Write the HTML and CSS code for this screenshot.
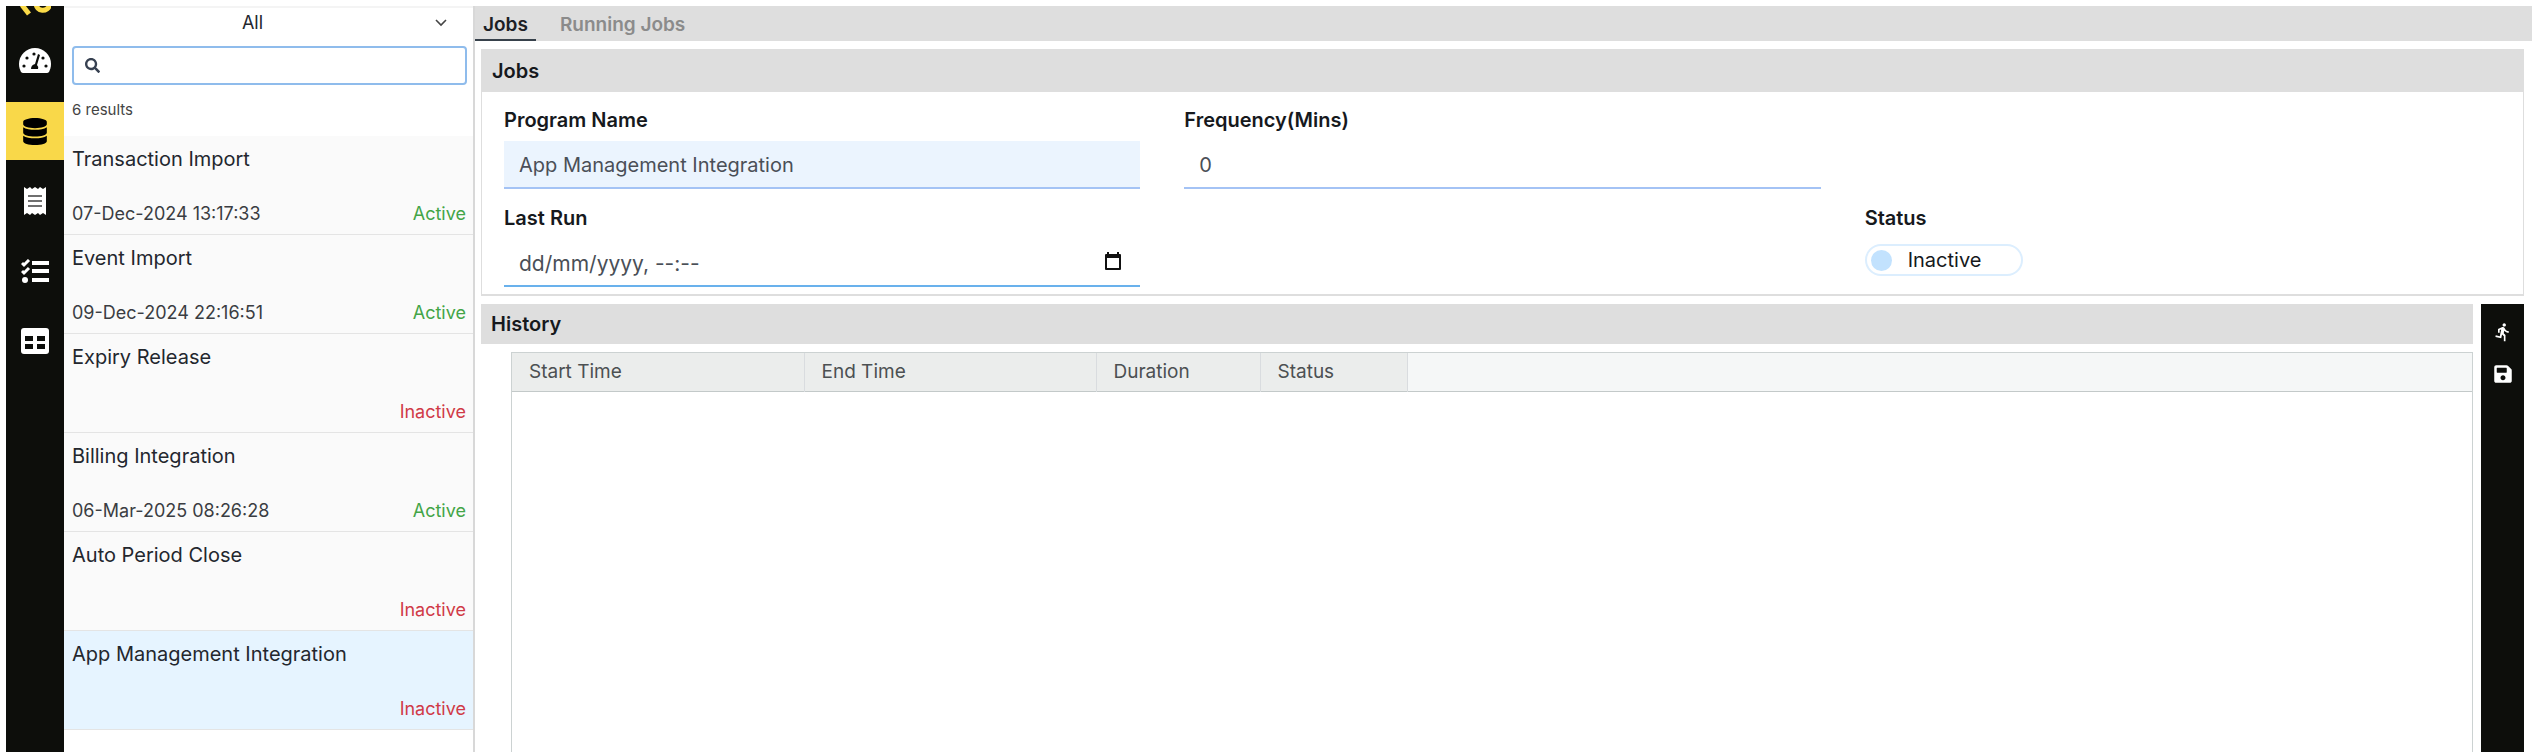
FILE: index.html
```html
<!DOCTYPE html>
<html lang="en">
<head>
    <meta charset="UTF-8">
    <meta name="viewport" content="width=device-width, initial-scale=1.0">
    <title>Jobs</title>
    <link rel="stylesheet" href="styles.css">
</head>
<body>
    <div class="app">
        <nav class="sidebar">
            <a href="#" class="logo" aria-label="Home">
                <svg width="32" height="14" viewBox="0 0 32 14">
                    <path d="M3 -1L10 8" stroke="#fbdb48" stroke-width="5"/>
                    <path d="M17 -3C17 6 29 7 31 -2" stroke="#fbdb48" stroke-width="5" fill="none"/>
                </svg>
            </a>
            <a href="#" class="nav-item" aria-label="Dashboard">
                <svg width="32" height="26" viewBox="0 0 32 26">
                    <path fill="#fff" d="M16 0A16 16 0 0 0 0 16C0 19 1 22 2 24Q3 25 4 25H28Q29 25 30 24C31 22 32 19 32 16A16 16 0 0 0 16 0Z"/>
                    <g fill="#0d0e0b">
                        <circle cx="5" cy="18" r="1.6"/>
                        <circle cx="8" cy="10" r="1.6"/>
                        <circle cx="15" cy="6" r="1.6"/>
                        <circle cx="24" cy="10" r="1.6"/>
                        <circle cx="27" cy="18" r="1.6"/>
                        <path d="M19 6L21 7L18 17Q20 19 19 21H12Q12 17 16 16Z"/>
                    </g>
                </svg>
            </a>
            <a href="#" class="nav-item active" aria-label="Jobs">
                <svg width="24" height="27" viewBox="0 0 448 512">
                    <path d="M448 73.143v45.714C448 159.143 347.667 192 224 192S0 159.143 0 118.857V73.143C0 32.857 100.333 0 224 0s224 32.857 224 73.143zM448 176v102.857C448 319.143 347.667 352 224 352S0 319.143 0 278.857V176c48.125 33.143 136.208 48.572 224 48.572S399.874 209.143 448 176zm0 160v102.857C448 479.143 347.667 512 224 512S0 479.143 0 438.857V336c48.125 33.143 136.208 48.572 224 48.572S399.874 369.143 448 336z"/>
                </svg>
            </a>
            <a href="#" class="nav-item" aria-label="Receipts">
                <svg width="22" height="28" viewBox="0 0 22 28">
                    <path fill="#fff" d="M0 0L3 2L6 0L8 2L11 0L14 2L16 0L19 2L22 0V28L19 26L16 28L14 26L11 28L8 26L6 28L3 26L0 28Z"/>
                    <path stroke="#6f6f6f" stroke-width="2" d="M4 9H18M4 14H18M4 19H18"/>
                </svg>
            </a>
            <a href="#" class="nav-item" aria-label="Tasks">
                <svg width="28" height="24" viewBox="0 0 28 24">
                    <g stroke="#fff" fill="none">
                        <path stroke-width="4" d="M11 4H28M11 12H28M11 21H28"/>
                        <path stroke-width="3" d="M1 4L3 6L8 1M1 12L3 14L8 9"/>
                    </g>
                    <circle cx="4" cy="21" r="3" fill="#fff"/>
                </svg>
            </a>
            <a href="#" class="nav-item" aria-label="Tables">
                <svg width="28" height="26" viewBox="0 0 28 26">
                    <rect width="28" height="26" rx="3" fill="#fff"/>
                    <path fill="#0d0e0b" d="M4 8H12V13H4ZM16 8H24V13H16ZM4 16H12V21H4ZM16 16H24V21H16Z"/>
                </svg>
            </a>
        </nav>

        <aside class="list-panel">
            <div class="filter">
                <select aria-label="Status filter">
                    <option>All</option>
                    <option>Active</option>
                    <option>Inactive</option>
                </select>
                <svg class="chevron" width="12" height="8" viewBox="0 0 12 8">
                    <path d="M1 1L6 6L11 1" fill="none" stroke="#444" stroke-width="1.6"/>
                </svg>
            </div>
            <div class="search">
                <svg width="15" height="15" viewBox="0 0 512 512">
                    <path fill="#374151" d="M505 442.7L405.3 343c-4.5-4.5-10.6-7-17-7H372c27.6-35.3 44-79.7 44-128C416 93.1 322.9 0 208 0S0 93.1 0 208s93.1 208 208 208c48.3 0 92.7-16.4 128-44v16.3c0 6.4 2.5 12.5 7 17l99.7 99.7c9.4 9.4 24.6 9.4 33.9 0l28.3-28.3c9.4-9.4 9.4-24.6.1-34zM208 336c-70.7 0-128-57.2-128-128 0-70.7 57.2-128 128-128 70.7 0 128 57.2 128 128 0 70.7-57.2 128-128 128z"/>
                </svg>
                <input type="text" aria-label="Search">
            </div>
            <p class="results">6 results</p>
            <ul class="job-list">
                <li>
                    <h2>Transaction Import</h2>
                    <p><span>07-Dec-2024 13:17:33</span><span class="on">Active</span></p>
                </li>
                <li>
                    <h2>Event Import</h2>
                    <p><span>09-Dec-2024 22:16:51</span><span class="on">Active</span></p>
                </li>
                <li>
                    <h2>Expiry Release</h2>
                    <p><span></span><span class="off">Inactive</span></p>
                </li>
                <li>
                    <h2>Billing Integration</h2>
                    <p><span>06-Mar-2025 08:26:28</span><span class="on">Active</span></p>
                </li>
                <li>
                    <h2>Auto Period Close</h2>
                    <p><span></span><span class="off">Inactive</span></p>
                </li>
                <li class="selected">
                    <h2>App Management Integration</h2>
                    <p><span></span><span class="off">Inactive</span></p>
                </li>
            </ul>
        </aside>

        <main>
            <div class="tabs">
                <button class="tab current">Jobs</button>
                <button class="tab">Running Jobs</button>
            </div>

            <section class="card">
                <h3>Jobs</h3>
                <form class="fields">
                    <div class="field">
                        <label for="program">Program Name</label>
                        <input id="program" class="filled" type="text" value="App Management Integration">
                    </div>
                    <div class="field">
                        <label for="frequency">Frequency(Mins)</label>
                        <input id="frequency" type="text" value="0">
                    </div>
                    <div class="field first">
                        <label for="last-run">Last Run</label>
                        <div class="date">
                            <input id="last-run" type="text" placeholder="dd/mm/yyyy, --:--">
                            <button type="button" aria-label="Pick a date">
                                <svg width="18" height="18" viewBox="0 0 18 18">
                                    <path fill="#111" d="M3 0H5V2H13V0H15V2H16Q17 2 17 3V17Q17 18 16 18H2Q1 18 1 17V3Q1 2 2 2H3ZM3 6V16H15V6Z"/>
                                </svg>
                            </button>
                        </div>
                    </div>
                    <div class="field last">
                        <label for="status">Status</label>
                        <label class="toggle"><input id="status" type="checkbox"><span>Inactive</span></label>
                    </div>
                </form>
            </section>

            <div class="bottom">
                <section class="history">
                    <h3>History</h3>
                    <div class="grid">
                        <table>
                            <thead>
                                <tr>
                                    <th class="time">Start Time</th>
                                    <th class="time">End Time</th>
                                    <th class="duration">Duration</th>
                                    <th class="status">Status</th>
                                    <td></td>
                                </tr>
                            </thead>
                        </table>
                    </div>
                </section>
                <div class="actions">
                    <button aria-label="Run">
                        <svg width="20" height="20" viewBox="0 0 24 24">
                            <path fill="#fff" d="M13.49 5.48c1.1 0 2-.9 2-2s-.9-2-2-2-2 .9-2 2 .9 2 2 2zm-3.6 13.9l1-4.4 2.1 2v6h2v-7.5l-2.1-2 .6-3c1.3 1.5 3.3 2.5 5.5 2.5v-2c-1.9 0-3.5-1-4.3-2.4l-1-1.6c-.4-.6-1-1-1.7-1-.3 0-.5.1-.8.1l-5.2 2.2v4.7h2v-3.4l1.8-.7-1.6 8.1-4.9-1-.4 2 7 1.4z"/>
                        </svg>
                    </button>
                    <button aria-label="Save">
                        <svg width="18" height="20" viewBox="0 0 448 512">
                            <path fill="#fff" d="M433.941 129.941l-83.882-83.882A48 48 0 0 0 316.118 32H48C21.49 32 0 53.49 0 80v352c0 26.51 21.49 48 48 48h352c26.51 0 48-21.49 48-48V163.882a48 48 0 0 0-14.059-33.941zM224 416c-35.346 0-64-28.654-64-64 0-35.346 28.654-64 64-64s64 28.654 64 64c0 35.346-28.654 64-64 64zm96-304.52V212c0 6.627-5.373 12-12 12H76c-6.627 0-12-5.373-12-12V108c0-6.627 5.373-12 12-12h228.52c3.183 0 6.235 1.264 8.485 3.515l3.48 3.48A11.996 11.996 0 0 1 320 111.48z"/>
                        </svg>
                    </button>
                </div>
            </div>
        </main>
    </div>
</body>
</html>
```
FILE: styles.css
```css
*{
    box-sizing: border-box;
    margin: 0;
    padding: 0;
}

body{
    background: #fff;
    color: #23272e;
    font-family: Inter, "Liberation Sans", sans-serif;
    font-size: 20px;
    line-height: 24px;
}

button, input, select{
    font: inherit;
    color: inherit;
    border: 0;
    background: none;
    outline: none;
}

.app{
    display: flex;
    height: 100vh;
    padding: 6px 8px 4px 6px;
}

/* left icon bar */
.sidebar{
    width: 58px;
    flex-shrink: 0;
    display: flex;
    flex-direction: column;
    gap: 12px;
    background: #0d0e0b;
}

.logo{
    height: 14px;
    display: flex;
    justify-content: center;
}

.nav-item{
    height: 58px;
    display: flex;
    align-items: center;
    justify-content: center;
}

.nav-item.active{
    background: #f9d849;
}

/* job list */
.list-panel{
    width: 411px;
    flex-shrink: 0;
    border-right: 2px solid #d8d8d8;
}

.filter{
    position: relative;
    height: 40px;
    border-top: 2px solid #f4f4f4;
}

.filter select{
    width: 100%;
    height: 30px;
    padding-right: 32px;
    appearance: none;
    font-size: 18px;
    text-align-last: center;
}

.chevron{
    position: absolute;
    right: 26px;
    top: 11px;
    pointer-events: none;
}

.search{
    display: flex;
    align-items: center;
    gap: 8px;
    height: 39px;
    margin: 0 6px 0 8px;
    padding: 0 11px;
    border: 2px solid #8fbcec;
    border-radius: 4px;
}

.search input{
    flex: 1;
}

.results{
    height: 51px;
    padding: 13px 8px;
    font-size: 15px;
    color: #444;
}

.job-list{
    list-style: none;
}

.job-list li{
    height: 99px;
    padding: 11px 7px 8px 8px;
    display: flex;
    flex-direction: column;
    justify-content: space-between;
    background: #fafafa;
    border-bottom: 1px solid #e4e4e4;
}

.job-list li.selected{
    background: #e6f4ff;
}

.job-list h2{
    font-size: 20px;
    font-weight: 400;
}

.job-list p{
    display: flex;
    justify-content: space-between;
    font-size: 18px;
    color: #3a3d42;
}

.job-list .on{
    color: #43a547;
}

.job-list .off{
    color: #d03a47;
}

/* right side */
main{
    flex: 1;
    display: flex;
    flex-direction: column;
}

.tabs{
    display: flex;
    gap: 16px;
    height: 35px;
    background: #dedede;
}

.tab{
    padding: 4px 8px 0;
    font-size: 19px;
    font-weight: 600;
    color: #8b8b8b;
    border-bottom: 2px solid transparent;
}

.tab.current{
    color: #1c2025;
    border-color: #37414b;
}

h3{
    font-size: 20px;
    font-weight: 600;
    background: #dedede;
    color: #16191d;
}

.card{
    margin: 8px 8px 0 6px;
    border: 1px solid #dedede;
    border-bottom-width: 2px;
}

.card h3{
    padding: 9px 10px;
    height: 42px;
}

.fields{
    display: grid;
    grid-template-columns: repeat(3, 1fr);
    row-gap: 17px;
    padding: 16px 0 7px;
}

.field{
    padding: 0 22px;
}

.field.first{
    grid-column: 1;
}

.field.last{
    grid-column: 3;
}

.field label{
    display: block;
    margin-bottom: 9px;
    font-weight: 600;
    color: #16191d;
}

.field input[type="text"]{
    display: block;
    width: 100%;
    height: 48px;
    padding: 2px 15px 0;
    border-bottom: 2px solid #a4c3f5;
    color: #4a4f57;
}

.field input.filled{
    background: #ebf4fe;
}

.date{
    position: relative;
}

.field .date input{
    border-color: #69b1ec;
    font-size: 21px;
}

.date input::placeholder{
    color: #4a4f57;
    opacity: 1;
}

.date button{
    position: absolute;
    right: 18px;
    top: 13px;
    display: flex;
}

.field .toggle{
    display: flex;
    align-items: center;
    gap: 16px;
    width: 158px;
    height: 32px;
    margin-top: 14px;
    padding: 0 4px;
    border: 2px solid #dceefe;
    border-radius: 16px;
    font-weight: 400;
}

.toggle input{
    appearance: none;
    width: 21px;
    height: 21px;
    border-radius: 50%;
    background: #c2e2fe;
}

.bottom{
    flex: 1;
    display: flex;
    gap: 8px;
    margin: 8px 8px 0 6px;
}

.history{
    flex: 1;
    display: flex;
    flex-direction: column;
}

.history h3{
    height: 40px;
    padding: 8px 10px;
}

.grid{
    flex: 1;
    margin: 8px 0 0 30px;
    border: 1px solid #ccd2d2;
    border-bottom: 0;
}

table{
    width: 100%;
    table-layout: fixed;
    border-collapse: collapse;
}

thead{
    background: #f5f7f7;
}

th{
    height: 38px;
    padding: 0 17px;
    text-align: left;
    font-size: 19px;
    font-weight: 400;
    color: #4c5052;
    background: #ebedec;
    border-right: 1px solid #d9dcdf;
}

tr{
    border-bottom: 1px solid #c3c9c9;
}

.time{
    width: 292px;
}

.duration{
    width: 164px;
}

.status{
    width: 147px;
}

.actions{
    width: 43px;
    display: flex;
    flex-direction: column;
    gap: 22px;
    padding-top: 18px;
    background: #0d0e0b;
}

.actions button{
    display: flex;
    justify-content: center;
}
```
